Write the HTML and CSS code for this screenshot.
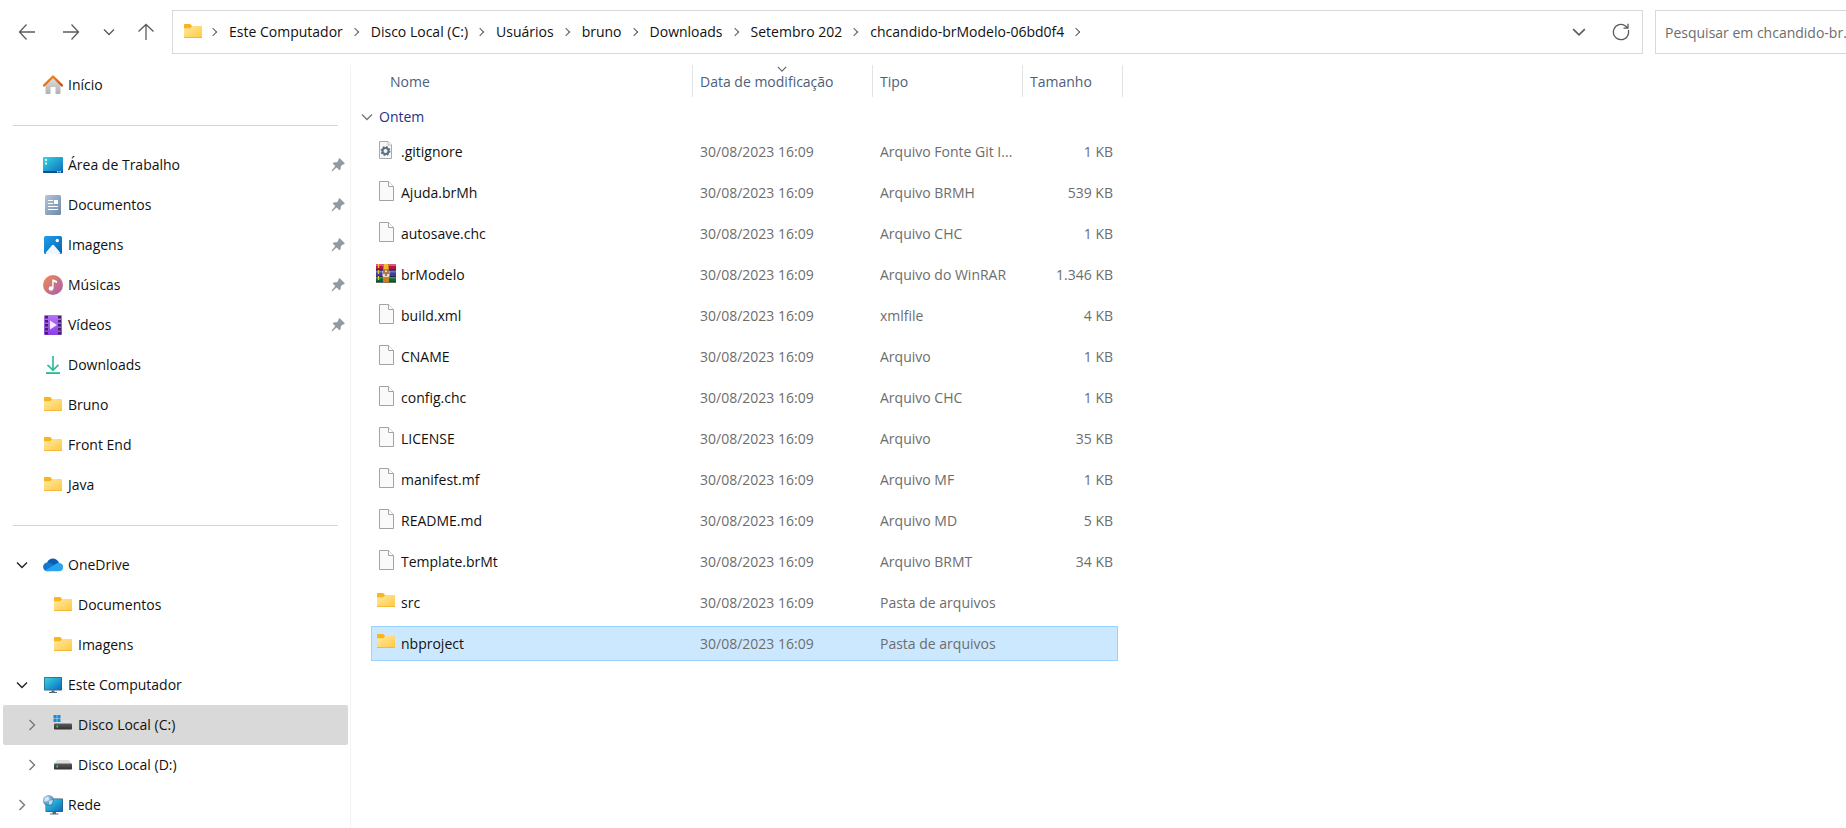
FILE: index.html
```html
<!DOCTYPE html>
<html lang="pt-BR">
<head>
<meta charset="utf-8">
<title>chcandido-brModelo-06bd0f4</title>
<link rel="stylesheet" href="styles.css">
</head>
<body>
<svg class="sprite" aria-hidden="true">
  <defs>
    <linearGradient id="gFolder" x1="0" y1="0" x2="1" y2="1"><stop offset="0" stop-color="#ffe8a6"/><stop offset="1" stop-color="#ffca3e"/></linearGradient>
    <linearGradient id="gScreen" x1="0" y1="0" x2="1" y2="1"><stop offset="0" stop-color="#35d8e2"/><stop offset="1" stop-color="#0c68be"/></linearGradient>
    <linearGradient id="gDoc" x1="0" y1="0" x2="1" y2="1"><stop offset="0" stop-color="#b4c6da"/><stop offset="1" stop-color="#6d88a6"/></linearGradient>
    <linearGradient id="gImg" x1="0" y1="0" x2="1" y2="1"><stop offset="0" stop-color="#1da0e8"/><stop offset="1" stop-color="#0861b4"/></linearGradient>
    <linearGradient id="gMusic" x1="0" y1="0" x2="1" y2="1"><stop offset="0" stop-color="#f58b50"/><stop offset="1" stop-color="#a45db4"/></linearGradient>
    <linearGradient id="gVideo" x1="0" y1="0" x2="0" y2="1"><stop offset="0" stop-color="#b573f5"/><stop offset="1" stop-color="#8b3fe4"/></linearGradient>
    <linearGradient id="gWall" x1="0" y1="0" x2="0" y2="1"><stop offset="0" stop-color="#e2e2e2"/><stop offset="1" stop-color="#b0b0b0"/></linearGradient>
    <linearGradient id="gRoof" x1="0" y1="0" x2="1" y2="1"><stop offset="0" stop-color="#f7931e"/><stop offset="1" stop-color="#d2480d"/></linearGradient>
    <linearGradient id="gDown" x1="0" y1="0" x2="0" y2="1"><stop offset="0" stop-color="#5fd3a6"/><stop offset="1" stop-color="#1ea79c"/></linearGradient>
    <linearGradient id="gDrive" x1="0" y1="0" x2="0" y2="1"><stop offset="0" stop-color="#5c5c5c"/><stop offset="1" stop-color="#303030"/></linearGradient>
    <radialGradient id="gGlobe" cx=".35" cy=".3" r=".8"><stop offset="0" stop-color="#b9dcf0"/><stop offset="1" stop-color="#2274a8"/></radialGradient>
  </defs>
  <symbol id="folder" viewBox="0 0 20 20"><path d="M1 2.800Q1 2 1.800 2H7.200L9 4V7H1z" fill="#f9b51c"/><path d="M1 6.200H7.400L9.200 4H18.200Q19 4 19 4.800V15.200Q19 16 18.200 16H1.800Q1 16 1 15.200z" fill="url(#gFolder)"/><path d="M1 15.500H19" stroke="#f3b93a" stroke-width="1"/></symbol>
  <symbol id="home" viewBox="0 0 20 20"><path d="M2.500 9 10 2 17.500 9V18Q17.500 19 16.500 19H12.500V12H7.500V19H3.500Q2.500 19 2.500 18z" fill="url(#gWall)"/><path d="M1 10.500 10 1.500 19 10.500" fill="none" stroke="url(#gRoof)" stroke-width="2.400" stroke-linecap="round" stroke-linejoin="round"/></symbol>
  <symbol id="desktop" viewBox="0 0 20 20"><rect y="2" width="20" height="16" rx="1" fill="url(#gScreen)"/><path d="M0 16H20V17Q20 18 19 18H1Q0 18 0 17z" fill="#0b5088"/><path d="M2 4H4V6H2zM2 7.500H4V9.500H2z" fill="#d9fbff"/><path d="M14 16H15.500V17.500H14zM16.500 16H18V17.500H16.500z" fill="#b8e0f5"/></symbol>
  <symbol id="document" viewBox="0 0 20 20"><rect x="2" width="16" height="20" rx="1.500" fill="url(#gDoc)"/><path d="M5 5.500H10M5 8.500H10M5 11.500H15M5 14.500H15" stroke="#fff" stroke-width="1.200"/><path d="M11 5H15V9H11z" fill="#fff"/></symbol>
  <symbol id="image" viewBox="0 0 20 20"><rect x="1" y="1" width="18" height="18" rx="1.500" fill="url(#gImg)"/><path d="M2.500 18 9 10.300Q10 9.200 11 10.300L17.500 18Q17 19 16 19H4Q3 19 2.500 18z" fill="#f1f8fd"/><circle cx="14.300" cy="5.500" r="1.700" fill="#fff"/></symbol>
  <symbol id="music" viewBox="0 0 20 20"><circle cx="10" cy="10" r="10" fill="url(#gMusic)"/><circle cx="8" cy="13.500" r="2.300" fill="#fff"/><path d="M9.200 13.500V4.500H10.500L14 6V8L10.600 7V13.500z" fill="#fff"/></symbol>
  <symbol id="video" viewBox="0 0 20 20"><rect x="1" width="18" height="20" rx="1" fill="url(#gVideo)"/><path d="M3.500 1V20M16.500 1V20" stroke="#45206f" stroke-width="3" stroke-dasharray="2.500 1.500"/><path d="M7 5.500 14 10 7 14.500z" fill="#f2e8ff"/></symbol>
  <symbol id="download" viewBox="0 0 20 20"><path d="M10 1V15M4.500 9.800 10 15.200 15.500 9.800" fill="none" stroke="#36bd9f" stroke-width="1.700"/><rect x="3" y="17" width="14" height="2" fill="url(#gDown)"/></symbol>
  <symbol id="cloud" viewBox="0 0 20 20"><path d="M4 8C5.500 2 14 2 16 8L17 12 4 12z" fill="#0b5cb5"/><path d="M4.500 16.300A4.400 4.400 0 0 1 4.500 7.400Q6 7.200 8 8.300L17 13z" fill="#1277d0"/><path d="M2 15.500 12 9.500A5.500 5.500 0 0 1 16 8.100 4.100 4.100 0 0 1 16 16.300H4.500Q3 16.300 2 15.500z" fill="#28a4ec"/></symbol>
  <symbol id="computer" viewBox="0 0 20 20"><rect x="1" y="2" width="18" height="13.500" rx=".8" fill="#285d7c"/><rect x="1.700" y="2.700" width="16.600" height="12.100" fill="url(#gScreen)"/><path d="M8.500 15.500H11.500V17H14V18H6V17H8.500z" fill="#566875"/></symbol>
  <symbol id="drive" viewBox="0 0 20 20"><path d="M4 5H16L19 9H1z" fill="#dedfe0"/><rect x="1" y="8.500" width="18" height="6" rx=".8" fill="url(#gDrive)"/><rect x="3.500" y="10.500" width="1.500" height="2" fill="#35df4b"/></symbol>
  <symbol id="drive-c" viewBox="0 0 20 20"><path d="M8 5H16L19 9H1L4 7z" fill="#dedfe0"/><rect x="1" y="8.500" width="18" height="6" rx=".8" fill="url(#gDrive)"/><rect x="3.500" y="10.500" width="1.500" height="2" fill="#35df4b"/><path d="M.500 0H3.700V3.200H.500zM4.300 0H7.500V3.200H4.300zM.500 3.800H3.700V7H.500zM4.300 3.800H7.500V7H4.300z" fill="#168cdb"/></symbol>
  <symbol id="network" viewBox="0 0 20 20"><rect x="2.500" y="3.500" width="17.500" height="13.500" rx=".8" fill="#285d7c"/><rect x="3.200" y="4.200" width="16.100" height="12.100" fill="url(#gScreen)"/><path d="M9.500 17H13V18.500H15.500V19.500H7V18.500H9.500z" fill="#566875"/><circle cx="5.500" cy="5.500" r="5.500" fill="url(#gGlobe)"/><path d="M2 3Q5 1 6 3T4 6 1 6zM6 6 10 5 9 9 6 10z" fill="#e3f2f8" opacity=".75"/></symbol>
  <symbol id="pin" viewBox="0 0 14 14"><path d="M8 .500Q8.500 0 9 .500L13.500 5Q14 5.500 13.300 6L11 7 9.800 8.500 9.500 11.500 8.500 12.300 5.500 9.500 1.200 13.500.500 12.800 4.300 8.300 1.800 5.500 2.500 4.500 5.800 4.200 7 3z" fill="#8f9aa2"/></symbol>
  <symbol id="file" viewBox="0 0 20 20"><path d="M3.500.500H12.500L17.500 5.500V19.500H3.500z" fill="#fafafa" stroke="#a3a3a3"/><path d="M12.500.500V5.500H17.500" fill="#fff" stroke="#a3a3a3"/></symbol>
  <symbol id="config" viewBox="0 0 20 20"><path d="M3.500 1.500H12L15.500 5V18.500H3.500z" fill="#f6f6f6" stroke="#aaa"/><path d="M12 1.500V5H15.500" fill="#fff" stroke="#bbb"/><circle cx="9.500" cy="11" r="3" fill="none" stroke="#5c7080" stroke-width="2"/><circle cx="9.500" cy="11" r="4.200" fill="none" stroke="#5c7080" stroke-width="1.500" stroke-dasharray="1.700 1.600"/></symbol>
  <symbol id="rar" viewBox="0 0 20 20"><rect y="1" width="20" height="6" fill="#b3163e"/><rect y="1" width="20" height="2" fill="#e0577b"/><rect y="7" width="20" height="6.500" fill="#3a3f9e"/><rect y="7.500" width="20" height="2" fill="#6f78cf"/><rect y="13.500" width="20" height="6" fill="#136638"/><rect y="14" width="20" height="1.500" fill="#2d9a56"/><path d="M0 7H20M0 13.500H20M0 19H20" stroke="#25152b" stroke-width=".8"/><path d="M2.500 1V19" stroke="#f1c232" stroke-width="1.400" stroke-dasharray="4 2"/><rect x="7" y="1" width="6" height="18.500" fill="#cf7d1f"/><rect x="8" y="1" width="4" height="5" fill="#f3b832"/><rect x="6.500" y="7.500" width="7" height="6.500" rx="1" fill="#eadfca"/><path d="M8 7V11M12 7V11M10 9V13" stroke="#8d4215" stroke-width="1.300"/></symbol>
  <symbol id="chev-down" viewBox="0 0 12 12"><path d="M1 3.500 6 8.500 11 3.500" fill="none" stroke="currentColor" stroke-width="1.400"/></symbol>
  <symbol id="chev-right" viewBox="0 0 12 12"><path d="M3.500 1 8.500 6 3.500 11" fill="none" stroke="currentColor" stroke-width="1.400"/></symbol>
  <symbol id="arrow" viewBox="0 0 18 18"><path d="M17 9H1.500M8.500 1.500 1.500 9 8.500 16.500" fill="none" stroke="currentColor" stroke-width="1.300"/></symbol>
  <symbol id="refresh" viewBox="0 0 18 18"><path d="M16.300 7A7.600 7.600 0 1 1 13.800 3.200L15.800 5M16 .800V5.200H11.500" fill="none" stroke="currentColor" stroke-width="1.300"/></symbol>
</svg>

<header class="toolbar">
  <nav class="history" aria-label="Navegação">
    <button class="tool" aria-label="Voltar"><svg class="arrow"><use href="#arrow"/></svg></button>
    <button class="tool" aria-label="Avançar"><svg class="arrow forward"><use href="#arrow"/></svg></button>
    <button class="tool narrow" aria-label="Locais recentes"><svg class="chev"><use href="#chev-down"/></svg></button>
    <button class="tool" aria-label="Para cima"><svg class="arrow up"><use href="#arrow"/></svg></button>
  </nav>
  <div class="address">
    <svg class="icon"><use href="#folder"/></svg>
    <ol class="crumbs">
      <li><a href="#">Este Computador</a></li>
      <li><a href="#">Disco Local (C:)</a></li>
      <li><a href="#">Usuários</a></li>
      <li><a href="#">bruno</a></li>
      <li><a href="#">Downloads</a></li>
      <li><a href="#">Setembro 202</a></li>
      <li><a href="#">chcandido-brModelo-06bd0f4</a></li>
    </ol>
    <button class="tool" aria-label="Locais anteriores"><svg class="chev large"><use href="#chev-down"/></svg></button>
    <button class="tool" aria-label="Atualizar"><svg class="arrow"><use href="#refresh"/></svg></button>
  </div>
  <input class="search" type="text" aria-label="Pesquisar" placeholder="Pesquisar em chcandido-br...">
</header>

<div class="window">
  <aside class="sidebar">
    <a class="place" href="#"><svg class="icon"><use href="#home"/></svg><span>Início</span></a>
    <hr class="divider">
    <a class="place" href="#"><svg class="icon"><use href="#desktop"/></svg><span>Área de Trabalho</span><svg class="pin"><use href="#pin"/></svg></a>
    <a class="place" href="#"><svg class="icon"><use href="#document"/></svg><span>Documentos</span><svg class="pin"><use href="#pin"/></svg></a>
    <a class="place" href="#"><svg class="icon"><use href="#image"/></svg><span>Imagens</span><svg class="pin"><use href="#pin"/></svg></a>
    <a class="place" href="#"><svg class="icon"><use href="#music"/></svg><span>Músicas</span><svg class="pin"><use href="#pin"/></svg></a>
    <a class="place" href="#"><svg class="icon"><use href="#video"/></svg><span>Vídeos</span><svg class="pin"><use href="#pin"/></svg></a>
    <a class="place" href="#"><svg class="icon"><use href="#download"/></svg><span>Downloads</span></a>
    <a class="place" href="#"><svg class="icon"><use href="#folder"/></svg><span>Bruno</span></a>
    <a class="place" href="#"><svg class="icon"><use href="#folder"/></svg><span>Front End</span></a>
    <a class="place" href="#"><svg class="icon"><use href="#folder"/></svg><span>Java</span></a>
    <hr class="divider">
    <a class="place branch" href="#"><svg class="chev open"><use href="#chev-down"/></svg><svg class="icon"><use href="#cloud"/></svg><span>OneDrive</span></a>
    <a class="place child" href="#"><svg class="icon"><use href="#folder"/></svg><span>Documentos</span></a>
    <a class="place child" href="#"><svg class="icon"><use href="#folder"/></svg><span>Imagens</span></a>
    <a class="place branch" href="#"><svg class="chev open"><use href="#chev-down"/></svg><svg class="icon"><use href="#computer"/></svg><span>Este Computador</span></a>
    <a class="place child branch selected" href="#"><svg class="chev"><use href="#chev-right"/></svg><svg class="icon"><use href="#drive-c"/></svg><span>Disco Local (C:)</span></a>
    <a class="place child branch" href="#"><svg class="chev"><use href="#chev-right"/></svg><svg class="icon"><use href="#drive"/></svg><span>Disco Local (D:)</span></a>
    <a class="place branch" href="#"><svg class="chev"><use href="#chev-right"/></svg><svg class="icon"><use href="#network"/></svg><span>Rede</span></a>
  </aside>

  <main class="content">
    <table class="files">
      <colgroup><col class="col-name"><col class="col-date"><col class="col-type"><col class="col-size"></colgroup>
      <thead>
        <tr><th scope="col">Nome</th><th scope="col" aria-sort="descending">Data de modificação<svg class="sort"><use href="#chev-down"/></svg></th><th scope="col">Tipo</th><th scope="col">Tamanho</th></tr>
      </thead>
      <tbody>
        <tr class="group"><th colspan="4" scope="rowgroup"><button class="toggle"><svg class="chev"><use href="#chev-down"/></svg>Ontem</button></th></tr>
        <tr><td><svg class="icon"><use href="#config"/></svg>.gitignore</td><td>30/08/2023 16:09</td><td>Arquivo Fonte Git I...</td><td>1 KB</td></tr>
        <tr><td><svg class="icon"><use href="#file"/></svg>Ajuda.brMh</td><td>30/08/2023 16:09</td><td>Arquivo BRMH</td><td>539 KB</td></tr>
        <tr><td><svg class="icon"><use href="#file"/></svg>autosave.chc</td><td>30/08/2023 16:09</td><td>Arquivo CHC</td><td>1 KB</td></tr>
        <tr><td><svg class="icon"><use href="#rar"/></svg>brModelo</td><td>30/08/2023 16:09</td><td>Arquivo do WinRAR</td><td>1.346 KB</td></tr>
        <tr><td><svg class="icon"><use href="#file"/></svg>build.xml</td><td>30/08/2023 16:09</td><td>xmlfile</td><td>4 KB</td></tr>
        <tr><td><svg class="icon"><use href="#file"/></svg>CNAME</td><td>30/08/2023 16:09</td><td>Arquivo</td><td>1 KB</td></tr>
        <tr><td><svg class="icon"><use href="#file"/></svg>config.chc</td><td>30/08/2023 16:09</td><td>Arquivo CHC</td><td>1 KB</td></tr>
        <tr><td><svg class="icon"><use href="#file"/></svg>LICENSE</td><td>30/08/2023 16:09</td><td>Arquivo</td><td>35 KB</td></tr>
        <tr><td><svg class="icon"><use href="#file"/></svg>manifest.mf</td><td>30/08/2023 16:09</td><td>Arquivo MF</td><td>1 KB</td></tr>
        <tr><td><svg class="icon"><use href="#file"/></svg>README.md</td><td>30/08/2023 16:09</td><td>Arquivo MD</td><td>5 KB</td></tr>
        <tr><td><svg class="icon"><use href="#file"/></svg>Template.brMt</td><td>30/08/2023 16:09</td><td>Arquivo BRMT</td><td>34 KB</td></tr>
        <tr><td><svg class="icon"><use href="#folder"/></svg>src</td><td>30/08/2023 16:09</td><td>Pasta de arquivos</td><td></td></tr>
        <tr class="selected"><td><svg class="icon"><use href="#folder"/></svg>nbproject</td><td>30/08/2023 16:09</td><td>Pasta de arquivos</td><td></td></tr>
      </tbody>
    </table>
  </main>
</div>
</body>
</html>
```

FILE: styles.css
```css
* { box-sizing: border-box; }

body {
  margin: 0;
  min-height: 100vh;
  display: flex;
  flex-direction: column;
  background: #fff;
  color: #111;
  font: 14px/20px "Segoe UI", "Open Sans", "Noto Sans", sans-serif;
}

button, input { font: inherit; }
a { color: inherit; text-decoration: none; }
svg { display: block; flex: none; }

.sprite { position: absolute; width: 0; height: 0; }
.icon { width: 20px; height: 20px; }
.chev { width: 12px; height: 12px; }
.arrow { width: 18px; height: 18px; }
.forward { transform: rotate(180deg); }
.up { transform: rotate(90deg); }

/* Toolbar */
.toolbar {
  display: flex;
  padding-top: 10px;
}

.history {
  display: flex;
  width: 172px;
  padding-left: 5px;
}

.tool {
  display: flex;
  align-items: center;
  justify-content: center;
  width: 44px;
  height: 44px;
  padding: 0;
  border: 0;
  background: none;
  color: #5c5c5c;
}

.tool.narrow { width: 32px; }
.history .tool:last-child { width: 42px; }

.address {
  display: flex;
  flex: 1;
  align-items: center;
  height: 44px;
  margin-right: 12px;
  padding-left: 10px;
  border: 1px solid #d9d9d9;
}

.address .tool { width: 42px; }
.address .chev.large { width: 14px; height: 14px; }

.crumbs {
  display: flex;
  flex: 1;
  margin: 0;
  padding: 0;
  list-style: none;
}

.crumbs li {
  display: flex;
  align-items: center;
}

.crumbs li::before,
.crumbs li:last-child::after {
  content: "";
  width: 5px;
  height: 5px;
  margin: 0 13px 0 9px;
  border: solid #5c5c5c;
  border-width: 1px 1px 0 0;
  transform: rotate(45deg);
}

.crumbs li:first-child::before { margin-left: 7px; }

.search {
  width: 191px;
  height: 44px;
  padding: 0 0 0 9px;
  border: 1px solid #d9d9d9;
  border-right: 0;
  border-radius: 0;
  outline: 0;
  background: #fff;
}

.search::placeholder { color: #6d6d6d; opacity: 1; }

/* Body */
.window {
  display: flex;
  flex: 1;
  padding-top: 5px;
}

.sidebar {
  width: 351px;
  margin-top: 6px;
  padding: 0 2px 0 3px;
  border-right: 1px solid #f3f3f3;
}

.place {
  display: flex;
  align-items: center;
  gap: 5px;
  height: 40px;
  padding: 0 3px 0 40px;
  border-radius: 2px;
}

.place span { flex: 1; }
.place .chev { margin-right: 10px; color: #777; }
.place .chev.open { color: #222; }
.pin { width: 14px; height: 14px; }
.child { padding-left: 50px; }
.branch { padding-left: 13px; }
.child.branch { padding-left: 23px; }
.place.selected { background: #d9d9d9; }

.divider {
  height: 1px;
  margin: 20px 10px 19px;
  border: 0;
  background: #d4d4d4;
}

/* File list */
.content {
  flex: 1;
  padding-left: 20px;
}

.files {
  width: 747px;
  table-layout: fixed;
  border-spacing: 0 6px;
  color: #6d6d6d;
}

.col-date { width: 180px; }
.col-type { width: 150px; }
.col-size { width: 96px; }

.files th,
.files td {
  padding: 0 0 0 8px;
  font-weight: 400;
  text-align: left;
  white-space: nowrap;
}

.files thead th {
  position: relative;
  height: 32px;
  padding-top: 2px;
  padding-left: 7px;
  border-left: 1px solid #e3e3e3;
  color: #4c607a;
}

.files thead th:first-child {
  padding-left: 19px;
  border-left: 0;
}

.files thead th:last-child::after {
  content: "";
  position: absolute;
  top: 0;
  bottom: 0;
  left: 99px;
  border-left: 1px solid #e3e3e3;
}

.sort {
  position: absolute;
  top: -1px;
  left: 84px;
  width: 10px;
  height: 10px;
  color: #666;
}

.files .group th {
  height: 25px;
  padding: 3px 0 0;
}

.toggle {
  display: flex;
  align-items: center;
  gap: 6px;
  margin-left: -10px;
  padding: 0;
  border: 0;
  background: none;
  color: #1e3287;
}

.toggle .chev { color: #777; }

.files td {
  height: 35px;
  padding-top: 1px;
}

.files td:first-child { padding-left: 5px; color: #111; }
.files td:last-child { padding-right: 5px; text-align: right; }

.files td .icon {
  display: inline-block;
  margin: -6px 5px 0 0;
  vertical-align: middle;
}

.files .selected td { background: #cce8ff; }
.files .selected { outline: 1px solid #99d1ff; outline-offset: -1px; }
```
